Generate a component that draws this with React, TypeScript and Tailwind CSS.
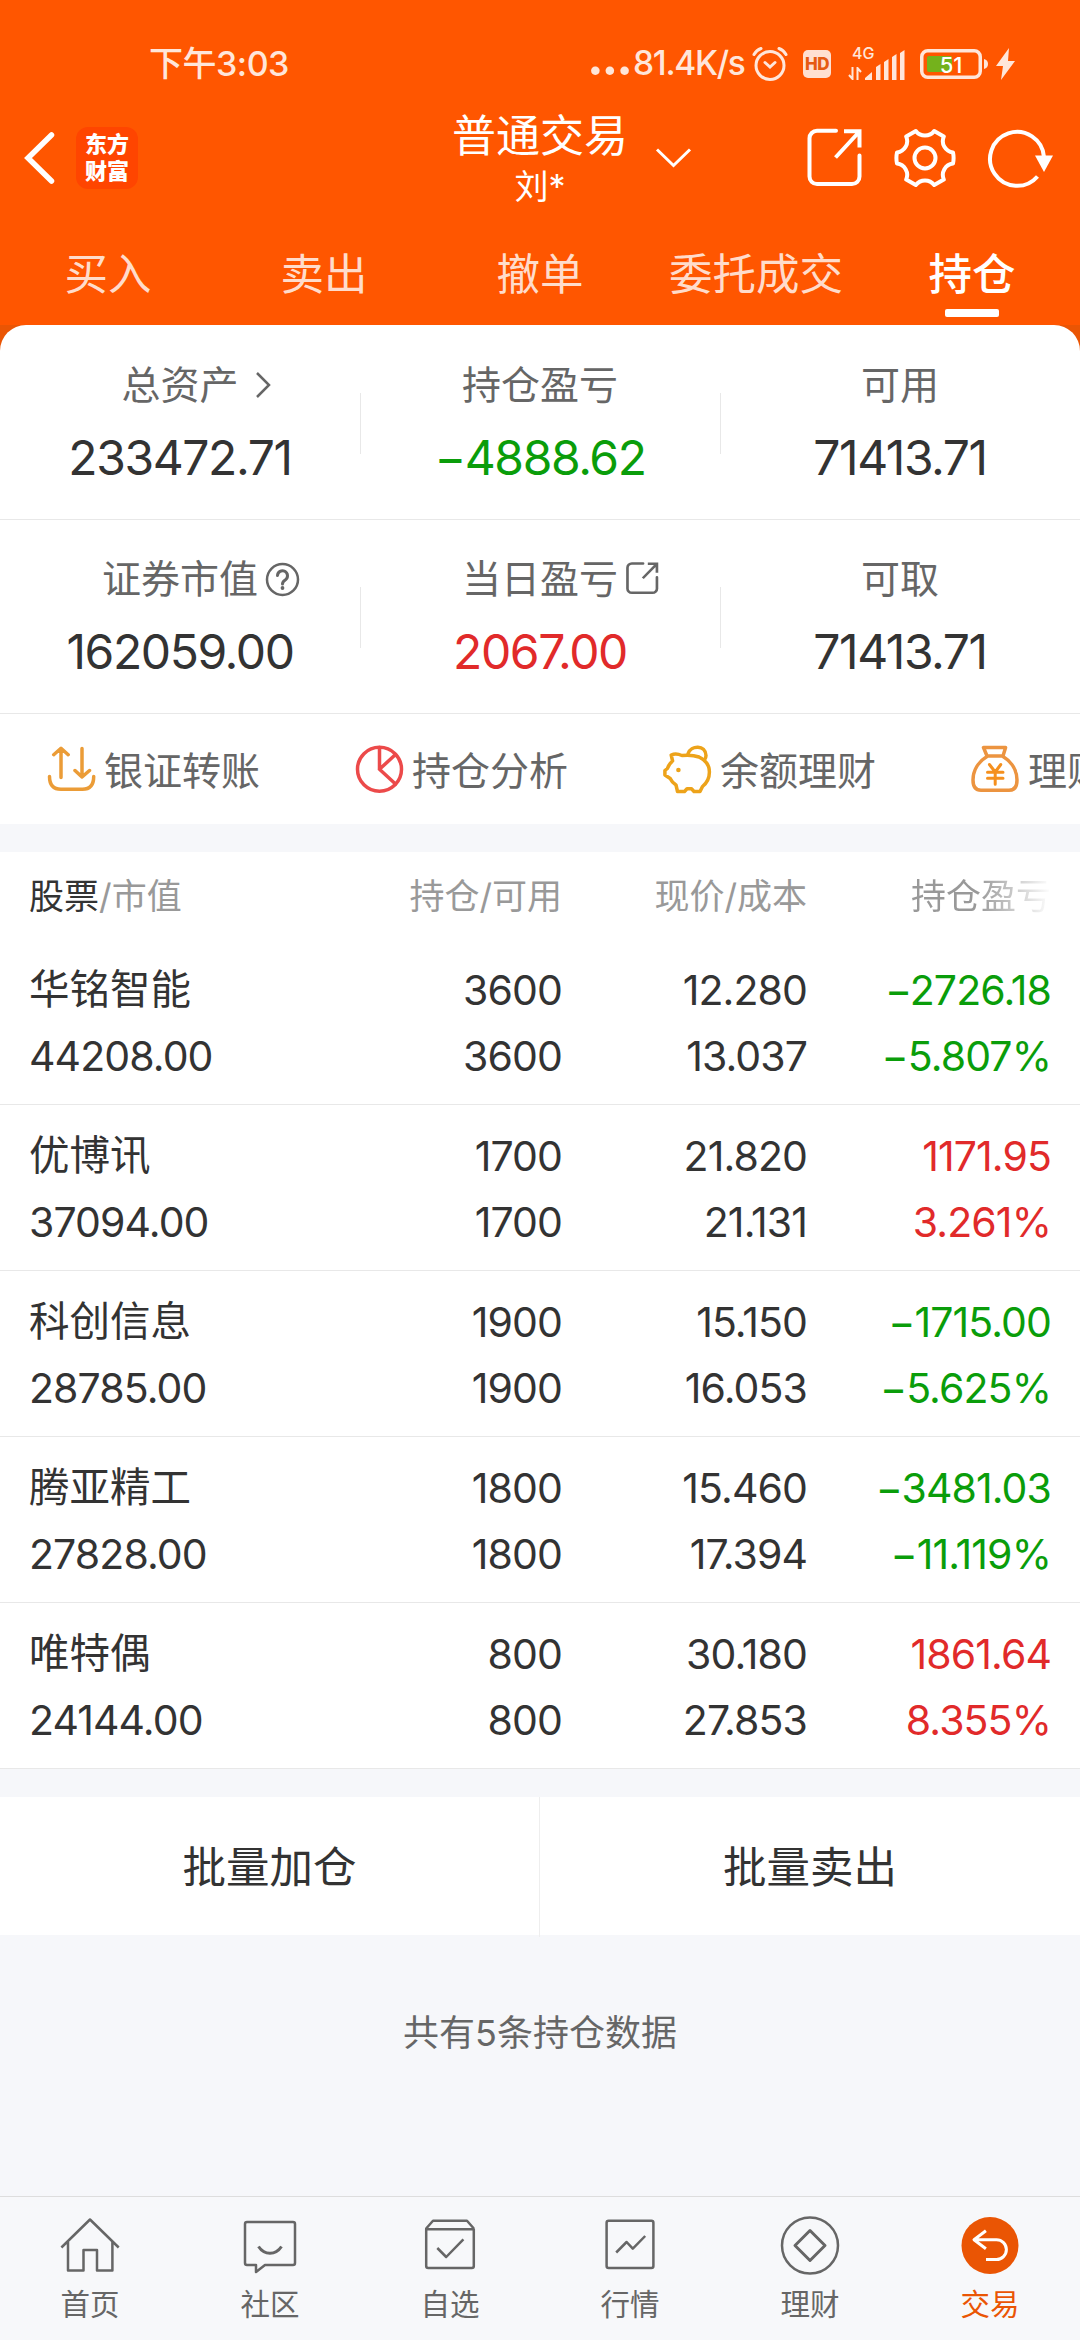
import type { ReactNode } from 'react';
import { clsx } from 'clsx';

interface Holding {
  name: string;
  value: string;
  amount: string;
  available: string;
  price: string;
  cost: string;
  profit: string;
  rate: string;
}

const holdings: Holding[] = [
  { name: '华铭智能', value: '44208.00', amount: '3600', available: '3600', price: '12.280', cost: '13.037', profit: '−2726.18', rate: '−5.807%' },
  { name: '优博讯', value: '37094.00', amount: '1700', available: '1700', price: '21.820', cost: '21.131', profit: '1171.95', rate: '3.261%' },
  { name: '科创信息', value: '28785.00', amount: '1900', available: '1900', price: '15.150', cost: '16.053', profit: '−1715.00', rate: '−5.625%' },
  { name: '腾亚精工', value: '27828.00', amount: '1800', available: '1800', price: '15.460', cost: '17.394', profit: '−3481.03', rate: '−11.119%' },
  { name: '唯特偶', value: '24144.00', amount: '800', available: '800', price: '30.180', cost: '27.853', profit: '1861.64', rate: '8.355%' },
];

const tabs = ['买入', '卖出', '撤单', '委托成交', '持仓'];

function StatusBar() {
  return (
    <div className="flex h-[104px] items-center justify-between pt-6 pl-[149px] pr-[65px] text-[#ffe6da]">
      <span className="text-[34px] leading-none font-medium tracking-[-0.5px]">下午3:03</span>
      <div className="flex items-center">
        <span className="mr-[2px] -mt-[14px] text-[50px] leading-[34px] font-bold tracking-[-2px]">...</span>
        <span className="w-[119px] text-[33.5px] leading-none font-medium tracking-[-1.3px] whitespace-nowrap">81.4K/s</span>
        <svg width="36" height="38" viewBox="0 0 36 38" fill="none" stroke="currentColor" strokeWidth="3" strokeLinecap="round">
          <circle cx="18" cy="20.5" r="14" />
          <path d="M13 17.5l5 4.5 5-4.5M2 9.5Q4.500 5 9 3.500M34 9.500Q31.500 5 27 3.500" />
        </svg>
        <div className="ml-[15px] flex h-7 w-7 items-center justify-center rounded-[5px] bg-[#ffe0d1] text-[17px] leading-none font-extrabold tracking-[-0.5px] text-[#e65a12]">
          HD
        </div>
        <div className="ml-[17px] flex h-8 w-[57px] items-end">
          <div className="flex h-full w-[17px] shrink-0 flex-col items-start justify-between">
            <span className="-mt-[2px] pl-1 text-[16px] leading-[14px] font-medium">4G</span>
            <svg width="14" height="13" viewBox="0 0 14 13" fill="none" stroke="currentColor" strokeWidth="2">
              <path d="M4.500 0v12L1 8M9.500 13V1l3.500 4" />
            </svg>
          </div>
          <svg className="shrink-0" width="40" height="30" viewBox="0 0 40 30" fill="currentColor">
            <path d="M0 30v-2l7-6v8zM11 17l4.500-3v16H11zM19 12l4.500-3v21H19zM27 7l4.500-3v26H27zM35 3l4.500-3v30H35z" />
          </svg>
        </div>
        <svg className="ml-[15px]" width="70" height="30" viewBox="0 0 70 30">
          <rect x="1.750" y="1.750" width="58.500" height="26.500" rx="6" fill="none" stroke="currentColor" strokeWidth="3.500" />
          <rect x="7" y="7" width="25" height="16" rx="2" fill="#74b21c" />
          <path d="M64 10q4 1 4 5t-4 5z" fill="currentColor" />
          <text x="31" y="23.500" textAnchor="middle" fontSize="22" fontWeight="500" fill="#fff">51</text>
        </svg>
        <svg className="ml-[6px]" width="19" height="32" viewBox="0 0 19 32" fill="currentColor">
          <path d="M13 0L0 18h7L5 32 19 13h-7z" />
        </svg>
      </div>
    </div>
  );
}

function ShareIcon({ className, strokeWidth }: { className: string; strokeWidth: number }) {
  return (
    <svg className={className} viewBox="0 0 56 60" fill="none" stroke="currentColor" strokeWidth={strokeWidth} preserveAspectRatio="none">
      <path d="M29 2.800H10a7.500 7.500 0 0 0-7.500 7.500V48.500a7.500 7.500 0 0 0 7.500 7.500H45a7.500 7.500 0 0 0 7.500-7.500V27.500" strokeLinecap="round" />
      <path d="M37 3.200H52.500V19.500M28.500 29.500L52 4" />
    </svg>
  );
}

function NavBar() {
  return (
    <div className="flex h-[107px] items-center text-white">
      <div className="flex w-[360px] items-center pl-6">
        <svg width="32" height="54" viewBox="0 0 32 54" fill="none" stroke="currentColor" strokeWidth="5.500" strokeLinecap="round">
          <path d="M27.500 4L4 27l23.500 23" />
        </svg>
        <div className="ml-5 flex h-[62px] w-[62px] flex-col items-center justify-center rounded-xl bg-[#ff4500] text-[22px] leading-[27px] font-black">
          <span>东方</span>
          <span>财富</span>
        </div>
      </div>
      <div className="grid w-[360px] grid-cols-[1fr_auto_1fr] items-center">
        <div />
        <div className="flex flex-col items-center pt-[2px]">
          <span className="text-[44px] leading-[58px]">普通交易</span>
          <span className="-mt-px text-[34px] leading-[46px]">刘*</span>
        </div>
        <svg className="ml-[27px]" width="37" height="20" viewBox="0 0 37 20" fill="none" stroke="currentColor" strokeWidth="3">
          <path d="M2 1.500l16.500 16L35 1.500" />
        </svg>
      </div>
      <div className="flex w-[360px] items-center justify-end gap-[31px] pr-[27px]">
        <ShareIcon className="h-[60px] w-[56px]" strokeWidth={4} />
        <svg width="62" height="62" viewBox="-31 -31 62 62" fill="none" stroke="currentColor" strokeWidth="4" strokeLinejoin="round">
          <path d="M28 5.500A11.500 11.500 0 0 0 18.800 21.500L9.200 27A11.500 11.500 0 0 0-9.200 27L-18.800 21.500A11.500 11.500 0 0 0-28 5.500Q-29.200 0-28-5.500A11.500 11.500 0 0 0-18.800-21.500L-9.200-27A11.500 11.500 0 0 0 9.200-27L18.800-21.500A11.500 11.500 0 0 0 28-5.500Q29.200 0 28 5.500z" />
          <circle r="10.500" />
        </svg>
        <svg width="66" height="62" viewBox="0 0 66 62" fill="none" stroke="currentColor" strokeWidth="4">
          <path d="M50.500 49.500A27 27 0 1 1 57 30" />
          <path d="M48 28.500h18L57 45z" fill="currentColor" stroke="none" />
        </svg>
      </div>
    </div>
  );
}

function TradeTabs() {
  return (
    <div className="grid h-[114px] grid-cols-5 text-[43.5px] text-[#ffdccb]">
      {tabs.map((tab) => (
        <div key={tab} className="flex flex-col items-center pt-[33px]">
          <span className={clsx('leading-[60px] whitespace-nowrap', tab === '持仓' && 'font-medium text-white')}>{tab}</span>
          {tab === '持仓' && <div className="mt-[5px] h-2 w-[54px] rounded-[2px] bg-white" />}
        </div>
      ))}
    </div>
  );
}

interface StatProps {
  label: string;
  value: string;
  icon?: ReactNode;
  color?: string;
}

function Stat({ label, value, icon, color = 'text-[#333]' }: StatProps) {
  return (
    <div className="flex flex-1 flex-col pt-[34px]">
      <div className="grid grid-cols-[1fr_auto_1fr] items-center text-[39px] leading-[50px] text-[#666]">
        <div />
        <span>{label}</span>
        <div>{icon}</div>
      </div>
      <span className={clsx('mt-[18px] text-center text-[48px] leading-[60px] tracking-[-1.4px]', color)}>{value}</span>
    </div>
  );
}

function StatRow({ children }: { children: ReactNode }) {
  return <div className="flex h-[194px] items-stretch border-b border-[#e8e8e8]">{children}</div>;
}

function Divider() {
  return <div className="mt-[67px] -mr-px h-[61px] w-px bg-[#e8e8e8]" />;
}

function Summary() {
  return (
    <div className="rounded-t-[26px] bg-white pt-px">
      <StatRow>
        <Stat
          label="总资产"
          value="233472.71"
          icon={
            <svg className="ml-[16px]" width="17" height="28" viewBox="0 0 17 28" fill="none" stroke="currentColor" strokeWidth="2.500">
              <path d="M2 2l12 12L2 26" />
            </svg>
          }
        />
        <Divider />
        <Stat label="持仓盈亏" value="−4888.62" color="text-[#0a9d0a]" />
        <Divider />
        <Stat label="可用" value="71413.71" />
      </StatRow>
      <StatRow>
        <Stat
          label="证券市值"
          value="162059.00"
          icon={
            <svg className="ml-[7px]" width="35" height="35" viewBox="0 0 35 35" fill="none" stroke="currentColor" strokeWidth="2.500" strokeLinecap="round">
              <circle cx="17.500" cy="17.500" r="15.500" />
              <path d="M12.500 13.500a5 5 0 1 1 8 4.200q-3 2-3 4.300" strokeWidth="3" />
              <circle cx="17.500" cy="26" r="1.900" fill="currentColor" stroke="none" />
            </svg>
          }
        />
        <Divider />
        <Stat label="当日盈亏" value="2067.00" color="text-[#e12a2a]" icon={<ShareIcon className="-mt-[2px] ml-[8px] h-[33px] w-[33px]" strokeWidth={4.5} />} />
        <Divider />
        <Stat label="可取" value="71413.71" />
      </StatRow>
    </div>
  );
}

function Shortcut({ label, children, className }: { label: string; className: string; children: ReactNode }) {
  return (
    <div className="flex w-[308px] shrink-0 items-center">
      <svg className={className} width="50" height="50" viewBox="0 0 50 50" fill="none" stroke="currentColor" strokeWidth="3.500" strokeLinecap="round" strokeLinejoin="round">
        {children}
      </svg>
      <span className="ml-[7px] pt-[3px] text-[39px] leading-[50px] text-[#666]">{label}</span>
    </div>
  );
}

function Shortcuts() {
  return (
    <div className="flex h-[110px] items-center overflow-hidden bg-white pl-[47px] whitespace-nowrap">
      <Shortcut label="银证转账" className="text-[#eb9c37]">
        <path d="M14 33.500V4.500M6.700 10.700L14 4.300l7.200 6.400M35 4.500V33M28 26.500l7 6.500 7.500-6.500M2.500 32.500Q2.500 45.300 14 45.300H35.500Q46.700 45.300 46.700 32.500" />
      </Shortcut>
      <Shortcut label="持仓分析" className="text-[#ec4a4a]">
        <circle cx="24.500" cy="25.300" r="22" />
        <path d="M24.500 3.500V25.300L40.500 10.500M24.500 25.300L40.500 40" />
      </Shortcut>
      <Shortcut label="余额理财" className="text-[#eda31a]">
        <path d="M18.900 11.500Q13 9 8.200 11L9.600 17Q6 20 4.400 24.500L1.900 26.500V31L7.200 34.500Q9 38.500 13 41L14.500 47.500H21.500L24 44.800H28.500L31 47.500H37L39.500 42.500Q46.400 37 46.400 28 46.400 18 36 13 29 10.500 18.900 11.500z" />
        <path d="M25 9.700C28 1 42.500.5 43 11.500Q43 14 41.300 16.300" />
        <circle cx="15.400" cy="26" r="2.300" fill="currentColor" stroke="none" />
      </Shortcut>
      <Shortcut label="理财" className="text-[#ec9440]">
        <path d="M12.500 3.500H34.600L32 12H16zM16 12.500C7 18 2 27 2 36Q2 46.300 10 46.300H38Q46 46.300 46 36C46 27 41 18 32 12.500" />
        <path d="M18.400 20.500L24.200 28l5.600-7.500M24.200 28V40.300M16.500 28.300H32M16.500 34.300H32" stroke="#f5901e" strokeWidth="3" />
      </Shortcut>
    </div>
  );
}

function HoldingRow({ holding }: { holding: Holding }) {
  const color = holding.profit.startsWith('−') ? 'text-[#0a9d0a]' : 'text-[#e12a2a]';
  return (
    <div className="grid h-[166px] grid-cols-[262px_271px_245px_244px] border-b border-[#e8e8e8] px-[29px] pt-[18px] text-[41px] leading-[66px] tracking-[-0.9px] text-[#333]">
      <div className="flex flex-col">
        <span className="text-[40.5px] tracking-normal">{holding.name}</span>
        <span>{holding.value}</span>
      </div>
      <div className="flex flex-col text-right">
        <span>{holding.amount}</span>
        <span>{holding.available}</span>
      </div>
      <div className="flex flex-col text-right">
        <span>{holding.price}</span>
        <span>{holding.cost}</span>
      </div>
      <div className={clsx('flex flex-col text-right', color)}>
        <span>{holding.profit}</span>
        <span>{holding.rate}</span>
      </div>
    </div>
  );
}

function HoldingTable() {
  return (
    <div className="mt-7 bg-white">
      <div className="grid h-[87px] grid-cols-[262px_271px_245px_244px] px-[29px] text-[35px] leading-[89px] text-[#999]">
        <span>
          <span className="text-[#333]">股票</span>/市值
        </span>
        <span className="text-right">持仓/可用</span>
        <span className="text-right">现价/成本</span>
        <span className="bg-linear-to-r from-[#999] from-70% to-white bg-clip-text text-right text-transparent">持仓盈亏</span>
      </div>
      {holdings.map((holding) => (
        <HoldingRow key={holding.name} holding={holding} />
      ))}
    </div>
  );
}

function BottomTab({ label, active, children }: { label: string; active?: boolean; children: ReactNode }) {
  return (
    <div className={clsx('flex flex-col items-center pt-[18px]', active ? 'text-[#ea5504]' : 'text-[#666]')}>
      <svg width="60" height="60" viewBox="0 0 60 60" fill="none" stroke="currentColor" strokeWidth="2.500" strokeLinejoin="round">
        {children}
      </svg>
      <span className="mt-[9px] text-[29.5px] leading-10">{label}</span>
    </div>
  );
}

function BottomBar() {
  return (
    <div className="grid h-[144px] grid-cols-6 border-t border-[#ddd] bg-[#f7f8fa]">
      <BottomTab label="首页">
        <path d="M1.400 32.500L30 4.500 58.700 32.500M8 27V55.500H23.500V35H37V55.500H52.400V27" />
      </BottomTab>
      <BottomTab label="社区">
        <path d="M7 7H53a2 2 0 0 1 2 2V48a2 2 0 0 1-2 2H25L16 57V50H7a2 2 0 0 1-2-2V9a2 2 0 0 1 2-2z" />
        <path d="M18.500 31.500Q23 38.300 30 38.300T41.500 31.500" strokeWidth="3" />
      </BottomTab>
      <BottomTab label="自选">
        <path d="M6.200 14.300H53.800V51a2 2 0 0 1-2 2H8.200a2 2 0 0 1-2-2V13.500L13 5.700H47L53.800 13.500M17.300 33l8.900 9L43.400 24.300" />
      </BottomTab>
      <BottomTab label="行情">
        <rect x="6.600" y="5.700" width="46.800" height="47.300" rx="2" />
        <path d="M16.200 37.500L26.600 27l6.200 6.700L45.200 21" />
      </BottomTab>
      <BottomTab label="理财">
        <circle cx="30" cy="30.500" r="28" />
        <path d="M30 15.500L45 30.500 30 45.500 15 30.500z" strokeWidth="3" />
      </BottomTab>
      <BottomTab label="交易" active>
        <circle cx="30" cy="30.500" r="28.500" fill="currentColor" stroke="none" />
        <path d="M25.900 15.700L14 24.700l11.900 9M14 24.700H36.500a9.900 9.900 0 0 1 0 19.800H26" stroke="#fff" strokeWidth="3" />
      </BottomTab>
    </div>
  );
}

export default function App() {
  return (
    <div className="flex h-[2340px] w-[1080px] flex-col overflow-hidden bg-[#f6f7fa] font-['Inter','Noto_Sans_CJK_SC',sans-serif]">
      <div className="bg-[#ff5600]">
        <StatusBar />
        <NavBar />
        <TradeTabs />
      </div>
      <div className="bg-[#ea5504]">
        <Summary />
      </div>
      <Shortcuts />
      <HoldingTable />
      <div className="mt-7 grid h-[138px] grid-cols-2 bg-white text-center text-[43.5px] leading-[140px] text-[#333]">
        <button className="border-r border-[#eee]">批量加仓</button>
        <button>批量卖出</button>
      </div>
      <p className="mt-[73px] mb-auto text-center text-[36px] leading-[50px] text-[#666]">共有5条持仓数据</p>
      <BottomBar />
    </div>
  );
}
